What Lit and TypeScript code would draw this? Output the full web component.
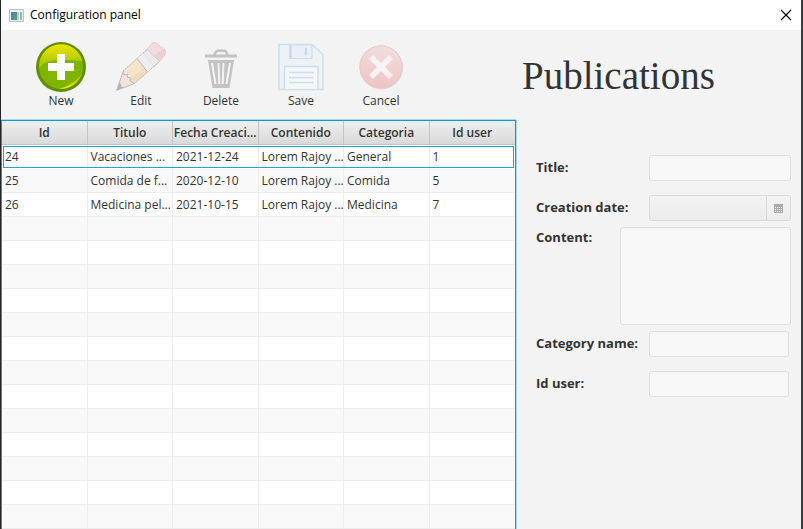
import { LitElement, html, css, svg, nothing } from "lit";
import { customElement } from "lit/decorators.js";
import { classMap } from "lit/directives/class-map.js";

interface Tool {
  label: string;
  disabled: boolean;
  icon: unknown;
}

const newIcon = svg`
  <defs>
    <linearGradient id="ng" x1="0.3" y1="0" x2="0.4" y2="1">
      <stop offset="0" stop-color="#eee400"/><stop offset="0.4" stop-color="#cfd800"/><stop offset="1" stop-color="#94c000"/>
    </linearGradient>
    <linearGradient id="nh" x1="0" y1="0" x2="1" y2="0">
      <stop offset="0" stop-color="#b5d000"/><stop offset="0.4" stop-color="#ece500"/><stop offset="1" stop-color="#a5cb00"/>
    </linearGradient>
  </defs>
  <circle cx="25" cy="25" r="25" fill="#609000"/>
  <circle cx="25" cy="25" r="22" fill="#7fb500"/>
  <path d="M3.2 27A22 22 0 0 1 46.4 19C34 18.500 10 14 3.2 27Z" fill="url(#ng)"/>
  <path d="M22 46.8C32 45 41 39 46 31.500A22 22 0 0 1 22 46.8Z" fill="url(#nh)"/>
  <path d="M21 12h8v9h9v8h-9v9h-8v-9h-9v-8h9z" fill="#fff"/>`;

const editIcon = svg`
  <path d="M31 7.500L36.500 1Q38 0 40 1L48.500 7.500Q50 9 49.500 12L43.500 19.500Z" fill="#f2dcdf" stroke="#c9bdbf" stroke-width="1" stroke-dasharray="1.500 0.700"/>
  <path d="M38 14L47 6.500L49.500 9.500L49 13L43.500 19.500Z" fill="#ebcfd3"/>
  <path d="M27 11L31 7.500L43.500 19.500L38 25Z" fill="#ebebeb" stroke="#c6c6c6" stroke-width="1" stroke-dasharray="1.500 0.700"/>
  <path d="M21 16.500L27 11L38 25L31.500 30Z" fill="#eeeeee"/>
  <path d="M7.500 28.500L21 16.500L31.500 30L18.500 41.500L13.500 39L12.500 33Z" fill="#f4e3cb"/>
  <path d="M13 37L29 26L31.500 30L18.500 41.500L13.500 40Z" fill="#eedabf"/>
  <path d="M21 16.500L31.500 30" stroke="#b9b5b0" stroke-width="1"/>
  <path d="M7.500 28.500L31 7.500M18.500 41.500L43.500 19.500" fill="none" stroke="#bbb7b2" stroke-width="1" stroke-dasharray="1.500 0.700"/>
  <path d="M7.500 28.500L0.700 48.300L18.500 41.500L14 39L14.500 36L11 35L12 32L8 33Z" fill="#efe5dc" stroke="#bdb9b4" stroke-width="1" stroke-linejoin="round"/>
  <path d="M3 41L0.700 48.300L8 45.500L5.500 44.500L5 42Z" fill="#b3b4b5"/>`;

const deleteIcon = svg`
  <path d="M18.500 13.500C19 9 21 8.500 25 8.500S31 9 31.500 13.500" fill="none" stroke="#c3c3c3" stroke-width="2.500"/>
  <path d="M9 12.500h32v3h-32z" fill="#c3c3c3"/>
  <path d="M12 18h26l-4.500 28h-17z" fill="#c3c3c3"/>
  <path d="M16 21l3.500 21M22.500 21l0.800 21M27.500 21l-0.800 21M34 21l-3.500 21" fill="none" stroke="#f3f3f3" stroke-width="2"/>`;

const saveIcon = svg`
  <path d="M3 2.500h33l11 10v35h-44z" fill="#eef2f6" stroke="#ccdeed" stroke-width="1.500"/>
  <path d="M14 3h22v13.500h-22z" fill="#e8eff6" stroke="#ccdeed" stroke-width="1.200"/>
  <path d="M14.500 3v13" stroke="#c5d8ea" stroke-width="2"/>
  <path d="M30 6v7.500" stroke="#c3d7e9" stroke-width="2"/>
  <path d="M8.500 47v-22.500h33.500v22.500" fill="#f5f6f7" stroke="#ccdeed" stroke-width="1.500"/>
  <path d="M13 30.500h25M13 35.500h25M13 40.500h25" stroke="#cddfee" stroke-width="1.300"/>`;

const cancelIcon = svg`
  <defs>
    <linearGradient id="cg" x1="0.500" y1="0" x2="0.400" y2="1">
      <stop offset="0" stop-color="#f2dede"/><stop offset="1" stop-color="#f0c2c2"/>
    </linearGradient>
  </defs>
  <circle cx="25.500" cy="26" r="21.500" fill="#dedede"/>
  <circle cx="25" cy="25" r="21.200" fill="url(#cg)" stroke="#e3c8c8" stroke-width="1"/>
  <path d="M17 13L25 21L33 13L37 17L29 25L37 33L33 37L25 29L17 37L13 33L21 25L13 17Z" fill="#f6f3f3"/>`;

const tools: Tool[] = [
  { label: "New", disabled: false, icon: newIcon },
  { label: "Edit", disabled: true, icon: editIcon },
  { label: "Delete", disabled: true, icon: deleteIcon },
  { label: "Save", disabled: true, icon: saveIcon },
  { label: "Cancel", disabled: true, icon: cancelIcon },
];

const columns = ["Id", "Titulo", "Fecha Creaci...", "Contenido", "Categoria", "Id user"];

const publications = [
  ["24", "Vacaciones ...", "2021-12-24", "Lorem Rajoy ...", "General", "1"],
  ["25", "Comida de f...", "2020-12-10", "Lorem Rajoy ...", "Comida", "5"],
  ["26", "Medicina pel...", "2021-10-15", "Lorem Rajoy ...", "Medicina", "7"],
];

const VISIBLE_ROWS = 16;

@customElement("tool-bar")
export class ToolBar extends LitElement {
  static styles = css`
    :host {
      display: flex;
      box-sizing: border-box;
      height: 90px;
      padding: 12px 20px 0;
    }
    .tool {
      display: flex;
      flex-direction: column;
      align-items: center;
      width: 80px;
      padding: 0;
      border: 0;
      background: none;
      color: #333;
      font: 12px/18px "Open Sans", "Noto Sans", sans-serif;
    }
    .icon {
      width: 50px;
      height: 50px;
    }
  `;

  render() {
    return tools.map(
      (t) => html`<button class="tool" type="button" ?disabled=${t.disabled}>
        <svg class="icon" viewBox="0 0 50 50" aria-hidden="true">${t.icon}</svg>
        <span>${t.label}</span>
      </button>`
    );
  }
}

@customElement("publication-table")
export class PublicationTable extends LitElement {
  static styles = css`
    :host {
      display: block;
      margin-right: 1px;
      border: 1px solid #039ed3;
      border-bottom: 0;
      box-shadow: 1px 0 #a6dcee, 0 -1px #a6dcee;
      background: #fff;
    }
    .table {
      width: 100%;
      table-layout: fixed;
      border-collapse: separate;
      border-spacing: 0;
      color: #333;
      font: 12px/16px "Open Sans", "Noto Sans", sans-serif;
    }
    .head,
    .cell {
      box-sizing: border-box;
      height: 24px;
      white-space: nowrap;
      overflow: hidden;
    }
    .head {
      padding: 0;
      border-right: 1px solid #c4c4c4;
      border-bottom: 1px solid #c4c4c4;
      background: linear-gradient(#efefef, #d9d9d9);
      font-weight: 600;
      text-align: center;
    }
    .cell {
      padding: 0 3px;
      border-right: 1px solid #ededed;
      border-bottom: 1px solid #ededed;
    }
    .head:last-child,
    .cell:last-child {
      border-right: 0;
    }
    .row:nth-child(even) {
      background: #f9f9f9;
    }
    .focused {
      outline: 1px solid #1ea5d0;
      outline-offset: -2px;
    }
    .focused .cell {
      border-bottom-color: #fff;
    }
  `;

  render() {
    const rows = Array.from({ length: VISIBLE_ROWS }, (_, i) => publications[i]);
    return html`<table class="table">
      <thead>
        <tr>${columns.map((c) => html`<th class="head" scope="col">${c}</th>`)}</tr>
      </thead>
      <tbody>
        ${rows.map(
          (r, i) => html`<tr class=${classMap({ row: true, focused: i === 0 })}>
            ${columns.map((_, c) => html`<td class="cell">${r ? r[c] : nothing}</td>`)}
          </tr>`
        )}
      </tbody>
    </table>`;
  }
}

@customElement("publication-form")
export class PublicationForm extends LitElement {
  static styles = css`
    :host {
      display: block;
      color: #333;
    }
    .heading {
      margin: 0;
      padding: 22px 5px 0;
      height: 103px;
      font: 39px/48px "Liberation Serif", serif;
    }
    .form {
      display: flex;
      flex-direction: column;
      gap: 6px;
      padding: 0 10px 0 19px;
      font: 13px/24px "Open Sans", "Noto Sans", sans-serif;
    }
    .group {
      display: flex;
      flex-direction: column;
      gap: 14px;
    }
    .group.narrow {
      padding-right: 2px;
    }
    .field {
      display: flex;
    }
    .label {
      flex: none;
      width: 113px;
      font-weight: 700;
      white-space: nowrap;
    }
    .label.short {
      width: 84px;
      line-height: 20px;
    }
    .input,
    .area,
    .date {
      box-sizing: border-box;
      flex: 1;
      min-width: 0;
      height: 26px;
      margin: 0;
      border: 1px solid #dfdfdf;
      border-radius: 3px;
      background: linear-gradient(#f4f4f4, #f8f8f8 4px);
      font: inherit;
    }
    .area {
      height: 98px;
      resize: none;
    }
    .date {
      display: flex;
      border-color: #dadada;
      background: linear-gradient(#f3f3f3, #ececec);
    }
    .date-input {
      flex: 1;
      min-width: 0;
      padding: 0 6px;
      border: 0;
      background: none;
      font: inherit;
    }
    .picker {
      display: flex;
      align-items: center;
      justify-content: center;
      width: 24px;
      padding: 0;
      border: 0;
      border-left: 1px solid #dadada;
      background: none;
    }
    .calendar {
      width: 9px;
      height: 9px;
    }
  `;

  render() {
    return html`
      <h1 class="heading">Publications</h1>
      <form class="form">
        <div class="group">
          <div class="field">
            <label class="label" for="title">Title:</label>
            <input class="input" id="title" type="text" disabled />
          </div>
          <div class="field">
            <label class="label" for="date">Creation date:</label>
            <div class="date">
              <input class="date-input" id="date" type="text" disabled />
              <button class="picker" type="button" aria-label="Pick a date" disabled>
                <svg class="calendar" viewBox="0 0 9 9" aria-hidden="true">
                  <path d="M0 0h9v9h-9z" fill="#aaa" />
                  <path
                    d="M1 3.500h7M1 5.500h7M1 7.500h7"
                    stroke="#eee"
                    stroke-width="1"
                    stroke-dasharray="1 1"
                  />
                </svg>
              </button>
            </div>
          </div>
        </div>
        <div class="field">
          <label class="label short" for="content">Content:</label>
          <textarea class="area" id="content" disabled></textarea>
        </div>
        <div class="group narrow">
          <div class="field">
            <label class="label" for="category">Category name:</label>
            <input class="input" id="category" type="text" disabled />
          </div>
          <div class="field">
            <label class="label" for="user">Id user:</label>
            <input class="input" id="user" type="text" disabled />
          </div>
        </div>
      </form>
    `;
  }
}

@customElement("app-root")
export class AppRoot extends LitElement {
  static styles = css`
    :host {
      display: flex;
      flex-direction: column;
      box-sizing: border-box;
      min-height: 100vh;
      border-left: 1px solid #232427;
      border-right: 2px solid #3b3e41;
      background: #f3f3f3;
    }
    .titlebar {
      display: flex;
      align-items: center;
      gap: 6px;
      height: 30px;
      padding: 0 9px 0 8px;
      background: #fff;
      color: #000;
      font: 12px/16px "Open Sans", "Noto Sans", sans-serif;
    }
    .app-icon {
      width: 15px;
      height: 13px;
    }
    .caption {
      flex: 1;
    }
    .close {
      display: flex;
      padding: 0;
      border: 0;
      background: none;
    }
    .cross {
      width: 12px;
      height: 12px;
    }
    .main {
      display: grid;
      flex: 1;
      grid-template-columns: minmax(0, 516fr) minmax(0, 284fr);
    }
  `;

  render() {
    return html`
      <header class="titlebar">
        <svg class="app-icon" viewBox="0 0 15 13" aria-hidden="true">
          <defs>
            <linearGradient id="pane" x1="0" y1="0" x2="1" y2="1">
              <stop offset="0" stop-color="#4f7ea6" />
              <stop offset="1" stop-color="#57a583" />
            </linearGradient>
          </defs>
          <path d="M0.500 0.500h14v12h-14z" fill="#eef0f2" stroke="#bbbfc4" />
          <path d="M2 3h6v8h-6z" fill="url(#pane)" />
          <path d="M8 3h2v8h-2z" fill="#b4cfd0" />
          <path d="M11 3h2v8h-2z" fill="#8fb9a8" />
        </svg>
        <span class="caption">Configuration panel</span>
        <button class="close" type="button" aria-label="Close">
          <svg class="cross" viewBox="0 0 12 12" aria-hidden="true">
            <path d="M1 1L11 11M11 1L1 11" stroke="#000" stroke-width="1.200" />
          </svg>
        </button>
      </header>
      <main class="main">
        <section>
          <tool-bar></tool-bar>
          <publication-table></publication-table>
        </section>
        <publication-form></publication-form>
      </main>
    `;
  }
}
